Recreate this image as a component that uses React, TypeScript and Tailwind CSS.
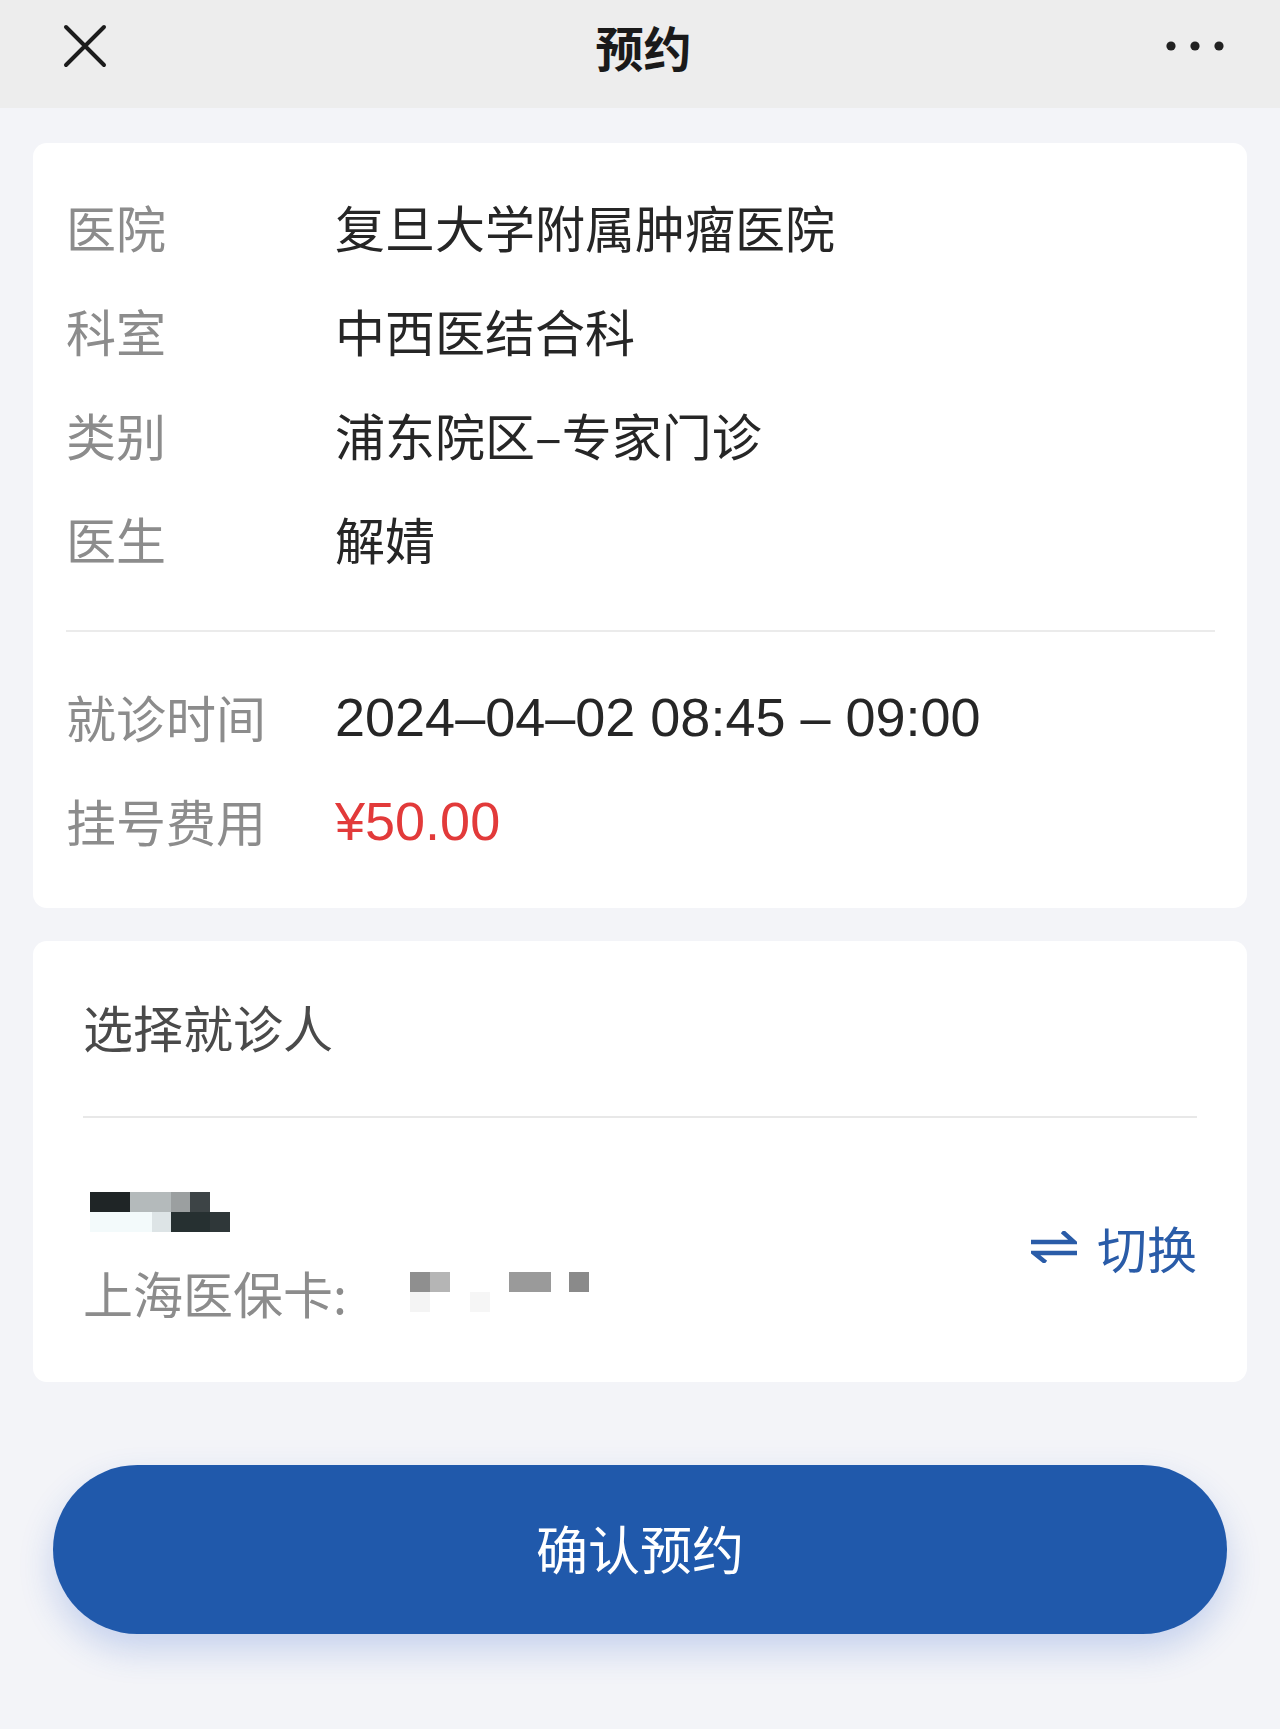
import React from "react";

const FONT = {
  fontFamily: '"Noto Sans CJK SC", "Noto Sans", sans-serif',
};

function Row({ label, children }: { label: string; children: React.ReactNode }) {
  return (
    <div className="flex h-[104px] items-center">
      <div className="w-[269px] shrink-0 text-[50px] leading-none text-[#8c8c8c]">{label}</div>
      <div className="text-[50px] leading-none text-[#262626]">{children}</div>
    </div>
  );
}

export default function App() {
  return (
    <div className="min-h-[1729px] w-full bg-[#f3f4f8]" style={FONT}>
      {/* Header */}
      <div className="grid h-[108px] grid-cols-[1fr_auto_1fr] items-center bg-[#ededed] pl-[63px] pr-[56px] pb-[16px]">
        <div className="flex items-center">
          <svg width="44" height="44" viewBox="0 0 44 44" fill="none">
            <path d="M3 3 L41 41 M41 3 L3 41" stroke="#1c1c1c" strokeWidth="4" strokeLinecap="round" />
          </svg>
        </div>
        <div className="text-[48px] font-bold leading-none text-[#1a1a1a]">预约</div>
        <div className="flex items-center justify-end">
          <svg width="58" height="12" viewBox="0 0 58 12">
            <circle cx="5" cy="6" r="4.6" fill="#222" />
            <circle cx="29" cy="6" r="4.6" fill="#222" />
            <circle cx="53" cy="6" r="4.6" fill="#222" />
          </svg>
        </div>
      </div>

      {/* Card 1 */}
      <div className="mx-[33px] mt-[35px] rounded-[14px] bg-white pl-[33px] pr-[32px] pt-[31px] pb-[36px]">
        <Row label="医院">复旦大学附属肿瘤医院</Row>
        <Row label="科室">中西医结合科</Row>
        <Row label="类别">浦东院区–专家门诊</Row>
        <Row label="医生">解婧</Row>
        <div className="mt-[40px] mb-[32px] h-[2px] bg-[#ebebeb]" />
        <Row label="就诊时间">
          <span className="text-[54px]" style={{ fontFamily: '"Liberation Sans", Arial, sans-serif' }}>
            2024–04–02 08:45 – 09:00
          </span>
        </Row>
        <Row label="挂号费用">
          <span className="text-[54px] text-[#e23a3a]" style={{ fontFamily: '"Liberation Sans", Arial, sans-serif' }}>
            ¥50.00
          </span>
        </Row>
      </div>

      {/* Card 2 */}
      <div className="mx-[33px] mt-[33px] rounded-[14px] bg-white px-[50px] pt-[33px]">
        <div className="flex h-[104px] items-center text-[50px] leading-none text-[#4a4a4a]">选择就诊人</div>
        <div className="mt-[38px] h-[2px] bg-[#e8e8e8]" />
        <div className="flex items-center justify-between pt-[74px] pb-[65px]">
          <div className="flex flex-col">
            {/* blurred name */}
            <div className="ml-[7px] flex flex-col">
              <div className="flex h-[20px]">
                <div className="w-[40px] bg-[#1f2526]" />
                <div className="w-[41px] bg-[#b4babb]" />
                <div className="w-[19px] bg-[#9b9fa0]" />
                <div className="w-[20px] bg-[#3d4446]" />
              </div>
              <div className="flex h-[20px]">
                <div className="w-[62px] bg-[#f3fafb]" />
                <div className="w-[19px] bg-[#dde4e6]" />
                <div className="w-[39px] bg-[#263031]" />
                <div className="w-[20px] bg-[#2f3739]" />
              </div>
            </div>
            <div className="mt-[35px] flex items-center">
              <span className="text-[50px] leading-[50px] text-[#8c8c8c]">上海医保卡:</span>
              <div className="ml-[63px] flex h-[40px] flex-col">
                <div className="flex h-[20px]">
                  <div className="w-[20px] bg-[#8f8f8f]" />
                  <div className="w-[20px] bg-[#b5b5b5]" />
                  <div className="w-[59px] bg-white" />
                  <div className="w-[42px] bg-[#9a9a9a]" />
                  <div className="w-[18px] bg-white" />
                  <div className="w-[20px] bg-[#8a8a8a]" />
                </div>
                <div className="flex h-[20px]">
                  <div className="w-[20px] bg-[#f4f4f4]" />
                  <div className="w-[40px] bg-white" />
                  <div className="w-[20px] bg-[#f6f6f6]" />
                </div>
              </div>
            </div>
          </div>
          <div className="mb-[16px] flex items-center gap-[20px] text-[#2a5ca8]">
            <svg width="46" height="32" viewBox="0 0 46 32" fill="none">
              <path d="M2 11 H43 L33 2" stroke="#2a5ca8" strokeWidth="4.5" strokeLinecap="square" strokeLinejoin="miter" />
              <path d="M44 22 H3 L13 30" stroke="#2a5ca8" strokeWidth="4.5" strokeLinecap="square" strokeLinejoin="miter" />
            </svg>
            <span className="text-[50px] leading-none">切换</span>
          </div>
        </div>
      </div>

      {/* Button */}
      <div className="mx-[53px] mt-[83px] flex h-[169px] items-center justify-center rounded-full bg-[#2059ab] pb-[4px] shadow-[0_16px_34px_rgba(40,90,200,0.22)]">
        <span className="text-[52px] leading-none text-white">确认预约</span>
      </div>
    </div>
  );
}
